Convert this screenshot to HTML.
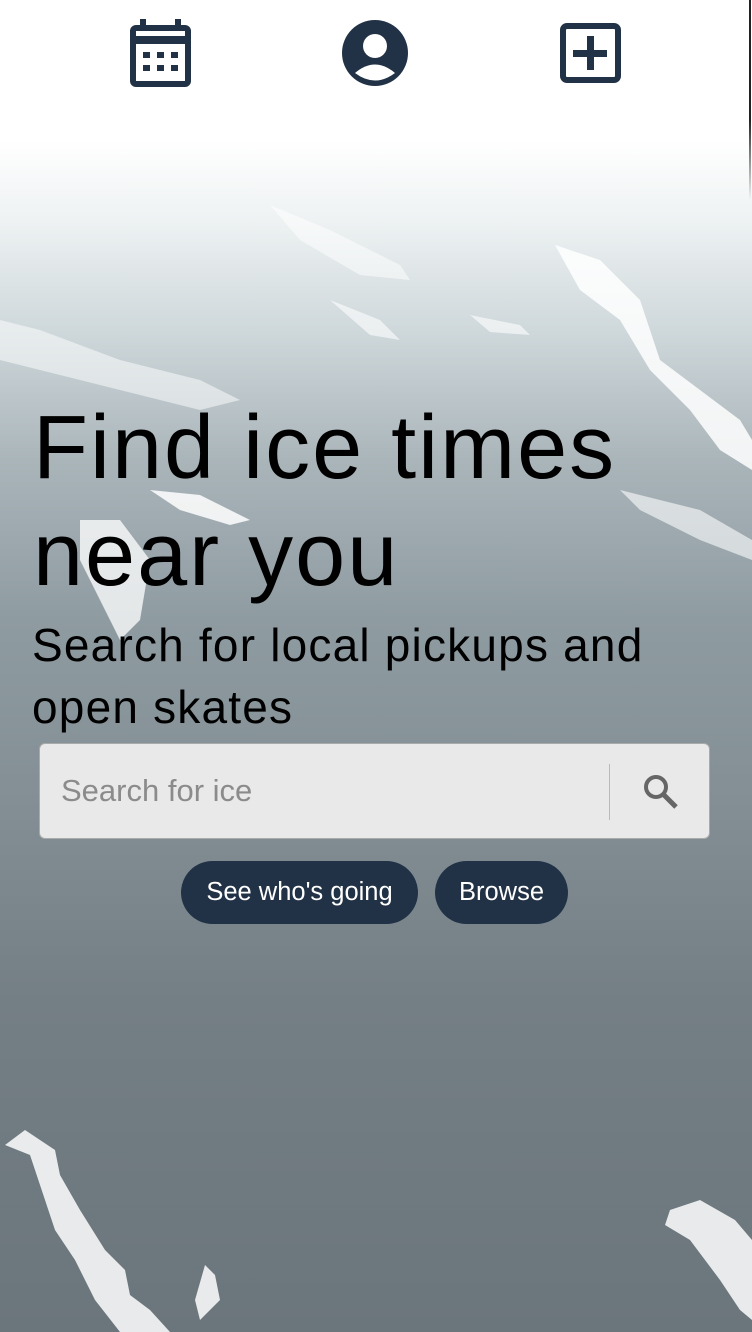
<!DOCTYPE html>
<html><head><meta charset="utf-8"><style>
html,body{margin:0;padding:0;width:752px;height:1332px;overflow:hidden;font-family:"Liberation Sans",Arial,sans-serif}
body{position:relative;background:linear-gradient(to bottom,#fff 0px,#fff 140px,#eef2f3 220px,#cfd8db 330px,#aab5ba 460px,#8e9ba1 620px,#838f95 800px,#747f85 1000px,#6b767c 1332px)}
.bg{position:absolute;left:0;top:0}
.edge{position:absolute;left:749px;top:0;width:2px;height:200px;background:linear-gradient(#222,#222 120px,rgba(0,0,0,0))}
.ic{position:absolute}
h1{position:absolute;left:33px;top:395px;margin:0;font-weight:400;font-size:90px;letter-spacing:2px;line-height:107px;color:#000;width:640px;white-space:nowrap}
.sub{position:absolute;left:32px;top:614px;font-size:46px;letter-spacing:1.2px;line-height:62px;color:#000;width:700px;white-space:nowrap}
.search{position:absolute;left:39px;top:743px;width:671px;height:96px;background:#e9e9e9;border:1px solid #aaa;border-radius:6px;box-sizing:border-box}
.ph{position:absolute;left:21px;top:29px;font-size:31px;color:#8b8b8b}
.div{position:absolute;left:569px;top:20px;width:1px;height:56px;background:#bbb}
.btn{position:absolute;top:861px;height:63px;border-radius:32px;background:#213246;color:#fff;font-size:25.5px;line-height:63px;text-align:center}
</style></head><body>
<svg class="bg" width="752" height="1332" viewBox="0 0 752 1332">
<g fill="#fff" opacity="0.85">
<path d="M270 205 L330 230 L400 265 L410 280 L360 275 L300 240Z" opacity=".6"/>
<path d="M555 245 L600 260 L640 300 L660 360 L700 390 L740 420 L752 440 L752 470 L720 450 L690 410 L650 370 L620 320 L580 290Z"/>
<path d="M0 320 L40 330 L120 360 L200 380 L240 400 L200 410 L120 390 L40 370 L0 360Z" opacity=".6"/>
<path d="M330 300 L380 320 L400 340 L370 335Z" opacity=".7"/>
<path d="M470 315 L520 325 L530 335 L490 332Z" opacity=".7"/>
<path d="M150 490 L200 495 L250 520 L230 525 L180 510Z"/>
<path d="M80 520 L120 520 L150 560 L140 620 L120 640 L100 600 L80 560Z" opacity=".9"/>
<path d="M620 490 L700 510 L752 540 L752 560 L700 540 L640 510Z" opacity=".7"/>
<path d="M5 1145 L25 1130 L55 1150 L60 1175 L80 1210 L105 1250 L125 1270 L130 1295 L150 1310 L170 1332 L120 1332 L95 1300 L75 1260 L55 1230 L45 1200 L30 1155Z"/>
<path d="M205 1265 L215 1275 L220 1300 L200 1320 L195 1300Z"/>
<path d="M670 1210 L700 1200 L735 1220 L752 1240 L752 1320 L740 1310 L720 1280 L690 1240 L665 1225Z"/>
</g>
</svg>
<div class="edge"></div>
<svg class="ic" style="left:130px;top:19px" width="61" height="68" viewBox="0 0 61 68">
<g fill="#213246">
<rect x="10" y="0" width="6" height="9"/><rect x="45" y="0" width="6" height="9"/>
<path d="M6 6h49a6 6 0 0 1 6 6v50a6 6 0 0 1-6 6H6a6 6 0 0 1-6-6V12a6 6 0 0 1 6-6zM6 12v5h49v-5zM6 25v37h49V25z" fill-rule="evenodd"/>
<rect x="13" y="33" width="7" height="6"/><rect x="27" y="33" width="7" height="6"/><rect x="41" y="33" width="7" height="6"/>
<rect x="13" y="46" width="7" height="6"/><rect x="27" y="46" width="7" height="6"/><rect x="41" y="46" width="7" height="6"/>
</g></svg>
<svg class="ic" style="left:342px;top:20px" width="66" height="66" viewBox="0 0 66 66">
<circle cx="33" cy="33" r="33" fill="#213246"/>
<circle cx="33" cy="26" r="12" fill="#fff"/>
<path d="M13 53 Q33 36 53 53 Q33 68 13 53Z" fill="#fff"/>
</svg>
<svg class="ic" style="left:560px;top:23px" width="61" height="60" viewBox="0 0 61 60">
<rect x="3" y="3" width="55" height="54" rx="4" fill="none" stroke="#213246" stroke-width="6"/>
<rect x="27" y="13" width="7" height="34" fill="#213246"/><rect x="13" y="27" width="34" height="7" fill="#213246"/>
</svg>
<h1>Find ice times<br>near you</h1>
<div class="sub">Search for local pickups and<br>open skates</div>
<div class="search"><div class="ph">Search for ice</div><div class="div"></div>
<svg style="position:absolute;left:603px;top:30px" width="36" height="36" viewBox="0 0 36 36"><circle cx="13" cy="13" r="10" fill="none" stroke="#666" stroke-width="4"/><path d="M20 20 L33 33" stroke="#666" stroke-width="5"/></svg>
</div>
<div class="btn" style="left:181px;width:237px">See who's going</div>
<div class="btn" style="left:435px;width:133px">Browse</div>
</body></html>
